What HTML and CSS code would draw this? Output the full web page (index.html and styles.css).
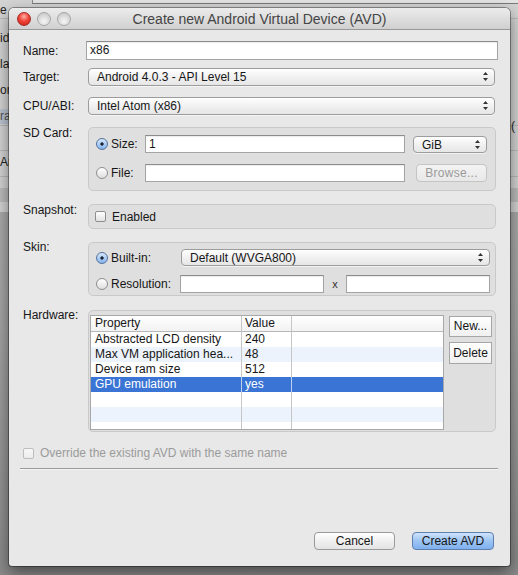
FILE: index.html
```html
<!DOCTYPE html>
<html>
<head>
<meta charset="utf-8">
<link rel="stylesheet" href="styles.css">
</head>
<body>
<div class="desk">
  <div class="behind">
    <div class="behind-top"></div>
    <span class="frag f1">e</span>
    <span class="frag f2">id</span>
    <span class="frag f3">la</span>
    <span class="frag f4">on</span>
    <span class="frag f5 hl">ra</span>
    <span class="frag f6">Ar</span>
    <div class="bline l1"></div>
    <div class="bline l2"></div>
    <div class="bline l3"></div>
    <div class="bline l4"></div>
    <div class="bband"></div>
    <span class="frag r1">(</span>
  </div>

  <div class="dialog">
    <div class="titlebar">
      <div class="lights">
        <span class="light red"></span>
        <span class="light"></span>
        <span class="light"></span>
      </div>
      <div class="title">Create new Android Virtual Device (AVD)</div>
    </div>

    <div class="content">
      <div class="row">
        <div class="lbl">Name:</div>
        <div class="ctl"><div class="input name-input">x86</div></div>
      </div>

      <div class="row mt8">
        <div class="lbl">Target:</div>
        <div class="ctl"><div class="select wide">Android 4.0.3 - API Level 15<span class="arrows"><svg width="5" height="9" viewBox="0 0 5 9"><path d="M2.5 0 L5 3 H0 Z M2.5 9 L5 6 H0 Z" fill="#333"/></svg></span></div></div>
      </div>

      <div class="row mt11">
        <div class="lbl">CPU/ABI:</div>
        <div class="ctl"><div class="select wide">Intel Atom (x86)<span class="arrows"><svg width="5" height="9" viewBox="0 0 5 9"><path d="M2.5 0 L5 3 H0 Z M2.5 9 L5 6 H0 Z" fill="#333"/></svg></span></div></div>
      </div>

      <div class="row top mt12">
        <div class="lbl lbl-top">SD Card:</div>
        <div class="ctl">
          <div class="group sd">
            <div class="grow">
              <div class="opt w49"><span class="radio on"></span>Size:</div>
              <div class="input field260">1</div>
              <div class="select unit">GiB<span class="arrows"><svg width="5" height="9" viewBox="0 0 5 9"><path d="M2.5 0 L5 3 H0 Z M2.5 9 L5 6 H0 Z" fill="#333"/></svg></span></div>
            </div>
            <div class="grow mt11">
              <div class="opt w49"><span class="radio"></span>File:</div>
              <div class="input field260"></div>
              <div class="btn browse">Browse...</div>
            </div>
          </div>
        </div>
      </div>

      <div class="row top mt13">
        <div class="lbl lbl-top">Snapshot:</div>
        <div class="ctl">
          <div class="group snap">
            <span class="check"></span>Enabled
          </div>
        </div>
      </div>

      <div class="row top mt13">
        <div class="lbl lbl-top2">Skin:</div>
        <div class="ctl">
          <div class="group skin">
            <div class="grow">
              <div class="opt w85"><span class="radio on"></span>Built-in:</div>
              <div class="select skinsel">Default (WVGA800)<span class="arrows"><svg width="5" height="9" viewBox="0 0 5 9"><path d="M2.5 0 L5 3 H0 Z M2.5 9 L5 6 H0 Z" fill="#333"/></svg></span></div>
            </div>
            <div class="grow mt9">
              <div class="opt w84"><span class="radio"></span>Resolution:</div>
              <div class="input res"></div>
              <div class="times">x</div>
              <div class="input res2"></div>
            </div>
          </div>
        </div>
      </div>

      <div class="row top mt14">
        <div class="lbl lbl-top2">Hardware:</div>
        <div class="ctl">
          <div class="group hw">
            <div class="table">
              <div class="trow head"><div class="c1">Property</div><div class="c2">Value</div><div class="c3"></div></div>
              <div class="trow"><div class="c1">Abstracted LCD density</div><div class="c2">240</div><div class="c3"></div></div>
              <div class="trow alt"><div class="c1">Max VM application hea...</div><div class="c2">48</div><div class="c3"></div></div>
              <div class="trow"><div class="c1">Device ram size</div><div class="c2">512</div><div class="c3"></div></div>
              <div class="trow sel"><div class="c1">GPU emulation</div><div class="c2">yes</div><div class="c3"></div></div>
              <div class="trow"><div class="c1"></div><div class="c2"></div><div class="c3"></div></div>
              <div class="trow alt"><div class="c1"></div><div class="c2"></div><div class="c3"></div></div>
              <div class="trow"><div class="c1"></div><div class="c2"></div><div class="c3"></div></div>
            </div>
            <div class="hwbtns">
              <div class="sqbtn new">New...</div>
              <div class="sqbtn del">Delete</div>
            </div>
          </div>
        </div>
      </div>

      <div class="override"><span class="check dis"></span>Override the existing AVD with the same name</div>

      <div class="sep"></div>

      <div class="actions">
        <div class="btn pbtn">Cancel</div>
        <div class="btn pbtn primary">Create AVD</div>
      </div>
    </div>
  </div>
</div>
</body>
</html>
```

FILE: styles.css
```css
html, body {
  margin: 0;
  padding: 0;
}
body {
  width: 518px;
  height: 575px;
  overflow: hidden;
  font-family: "Liberation Sans", Arial, sans-serif;
  font-size: 12px;
  color: #161616;
}
.desk {
  position: relative;
  width: 518px;
  height: 575px;
  background: linear-gradient(#b4b4b4 0, #a6a6a6 300px, #8a8a8a 575px);
  overflow: hidden;
}

/* window behind */
.behind {
  position: absolute;
  left: 0;
  top: 0;
  width: 518px;
  height: 212px;
  background: #d4d4d4;
}
.behind-top {
  position: absolute;
  left: 32px;
  top: 0;
  width: 486px;
  height: 3px;
  border-bottom: 1px solid #7a7a7a;
  background: #e4e4e4;
  border-left: 1px solid #888;
}
.frag {
  position: absolute;
  left: 0;
  font-size: 12px;
  color: #222;
  line-height: 14px;
}
.f1 { top: 3px; }
.f2 { top: 31px; }
.f3 { top: 57px; }
.f4 { top: 83px; }
.f5 { top: 109px; width: 20px; height: 15px; background: #bcc5d2; color: #555; }
.f6 { top: 155px; }
.r1 { left: 511px; top: 119px; }
.bline {
  position: absolute;
  left: 0;
  width: 518px;
  height: 1px;
  background: #b9b9b9;
}
.l1 { top: 18px; }
.l2 { top: 125px; }
.l3 { top: 150px; }
.l4 { top: 176px; }
.bband {
  position: absolute;
  left: 0;
  top: 188px;
  width: 518px;
  height: 14px;
  background: #bdbdbd;
}

/* dialog */
.dialog {
  position: absolute;
  left: 9px;
  top: 8px;
  width: 501px;
  height: 558px;
  background: #e8e8e8;
  border-radius: 5px 5px 3px 3px;
  box-shadow: 0 0 0 1px rgba(0,0,0,0.35), 0 6px 16px rgba(0,0,0,0.5);
  overflow: hidden;
}
.titlebar {
  position: relative;
  height: 21px;
  border-bottom: 1px solid #999;
  background: linear-gradient(#ececec, #d0d0d0);
  display: flex;
  align-items: center;
  justify-content: center;
}
.title {
  font-size: 14px;
  color: #444;
  margin-top: 1px;
}
.lights {
  position: absolute;
  left: 8px;
  top: 4px;
  display: flex;
  gap: 6px;
}
.light {
  width: 14px;
  height: 14px;
  box-sizing: border-box;
  border-radius: 50%;
  border: 1px solid #a5a5a5;
  background: radial-gradient(circle at 50% 70%, #f6f6f6 0, #d6d6d6 60%, #c2c2c2 100%);
}
.light.red {
  border-color: #a52a2a;
  background: radial-gradient(circle at 50% 30%, #ffb0a8 0, #f0463a 45%, #c81c14 100%);
}

.content {
  padding: 11px 12px 0 14px;
  display: flex;
  flex-direction: column;
}
.row {
  display: flex;
  align-items: center;
}
.row.top { align-items: flex-start; }
.mt8 { margin-top: 8px; }
.mt9 { margin-top: 9px; }
.mt11 { margin-top: 11px; }
.mt12 { margin-top: 12px; }
.mt13 { margin-top: 13px; }
.mt14 { margin-top: 14px; }
.lbl {
  width: 63px;
  flex: none;
}
.lbl-top { margin-top: -1px; }
.lbl-top2 { margin-top: -2px; }
.ctl { flex: 1; min-width: 0; }

.input {
  box-sizing: border-box;
  height: 18px;
  background: #fff;
  border: 1px solid #a4a4a4;
  border-top-color: #8c8c8c;
  padding-left: 3px;
  line-height: 16px;
  box-shadow: inset 0 1px 1px rgba(0,0,0,0.08);
}
.name-input { height: 19px; line-height: 17px; }

.select {
  position: relative;
  box-sizing: border-box;
  height: 18px;
  line-height: 16px;
  border: 1px solid #9c9c9c;
  border-radius: 4px;
  background: linear-gradient(#ffffff, #f1f1f1 50%, #e6e6e6);
  padding-left: 8px;
  box-shadow: 0 1px 0 rgba(255,255,255,0.6);
}
.select.wide { margin: 0 3px 0 2px; }
.arrows {
  position: absolute;
  right: 6px;
  top: 3px;
  height: 9px;
  display: flex;
}

.group {
  box-sizing: border-box;
  margin: 0 2px;
  background: #dfdfdf;
  border: 1px solid #c9c9c9;
  border-radius: 5px;
}
.sd { height: 64px; padding: 7px 8px 0 7px; }
.snap {
  height: 25px;
  padding-left: 6px;
  display: flex;
  align-items: center;
}
.skin { height: 54px; padding: 6px 5px 0 7px; }
.hw {
  height: 122px;
  padding: 4px 0 0 1px;
  display: flex;
  align-items: flex-start;
}

.grow {
  display: flex;
  align-items: center;
}
.opt {
  flex: none;
  display: flex;
  align-items: center;
  gap: 3px;
}
.w49 { width: 49px; }
.w85 { width: 85px; }
.w84 { width: 84px; }
.field260 { width: 260px; flex: none; }
.unit { width: 74px; height: 17px; margin-left: 8px; flex: none; }
.skinsel { flex: 1; height: 17px; }
.res { width: 144px; flex: none; }
.times { width: 22px; text-align: center; font-size: 11px; color: #333; }
.res2 { flex: 1; }

.radio {
  width: 12px;
  height: 12px;
  box-sizing: border-box;
  border-radius: 50%;
  border: 1px solid #8e8e8e;
  background: linear-gradient(#ffffff, #dedede);
  flex: none;
}
.radio.on {
  border-color: #55729c;
  background: radial-gradient(circle, #1b2435 0, #1b2435 1.3px, transparent 2px), linear-gradient(#d8e8fc, #85b4ee);
}
.check {
  width: 11px;
  height: 11px;
  box-sizing: border-box;
  border: 1px solid #8e8e8e;
  border-radius: 2px;
  background: linear-gradient(#ffffff, #e2e2e2);
  margin-right: 6px;
  flex: none;
}
.check.dis {
  border-color: #bdbdbd;
  background: linear-gradient(#f7f7f7, #ececec);
}

.btn {
  box-sizing: border-box;
  height: 18px;
  line-height: 16px;
  text-align: center;
  border: 1px solid #a2a2a2;
  border-radius: 4px;
  background: linear-gradient(#ffffff, #f0f0f0 50%, #e4e4e4);
}
.browse {
  width: 71px;
  margin-left: 11px;
  color: #9a9a9a;
  border-color: #c4c4c4;
  background: linear-gradient(#f3f3f3, #e8e8e8);
  letter-spacing: 0.3px;
}

.table {
  box-sizing: border-box;
  width: 354px;
  height: 115px;
  border: 1px solid #a8a8a8;
  background: #fff;
  overflow: hidden;
  flex: none;
}
.trow {
  display: flex;
  height: 15px;
  line-height: 15px;
}
.trow.head {
  height: 15px;
  border-bottom: 1px solid #b8b8b8;
  background: linear-gradient(#ffffff, #f2f2f2);
}
.trow.alt { background: #edf3fc; }
.trow.sel { background: #3a74d4; color: #fff; }
.c1 {
  width: 146px;
  padding-left: 4px;
  border-right: 1px solid #c6c6c6;
  white-space: nowrap;
  overflow: hidden;
}
.c2 {
  width: 46px;
  padding-left: 3px;
  border-right: 1px solid #c6c6c6;
}
.c3 { flex: 1; }
.trow.sel .c1, .trow.sel .c2 { border-right-color: #bcd0f0; }
.hwbtns {
  margin-left: 5px;
  margin-top: 1px;
  display: flex;
  flex-direction: column;
  gap: 5px;
}
.sqbtn {
  box-sizing: border-box;
  width: 43px;
  height: 21px;
  line-height: 19px;
  text-align: center;
  border: 1px solid #a6a6a6;
  background: linear-gradient(#ffffff, #f0f0f0);
}
.sqbtn.del { height: 22px; line-height: 20px; }

.override {
  margin-top: 15px;
  display: flex;
  align-items: center;
  color: #9b9b9b;
  height: 12px;
}
.sep {
  margin: 9px 0 0 -3px;
  height: 1px;
  background: #9a9a9a;
  box-shadow: 0 1px 0 #f5f5f5;
}
.actions {
  margin-top: 63px;
  margin-right: 4px;
  display: flex;
  justify-content: flex-end;
  gap: 17px;
}
.pbtn { width: 81px; border-color: #9a9a9a; }
.primary {
  width: 82px;
  border-color: #5e7fae;
  background: linear-gradient(#cfe3fb, #9cc4f2 50%, #7fb0ee);
}
```
